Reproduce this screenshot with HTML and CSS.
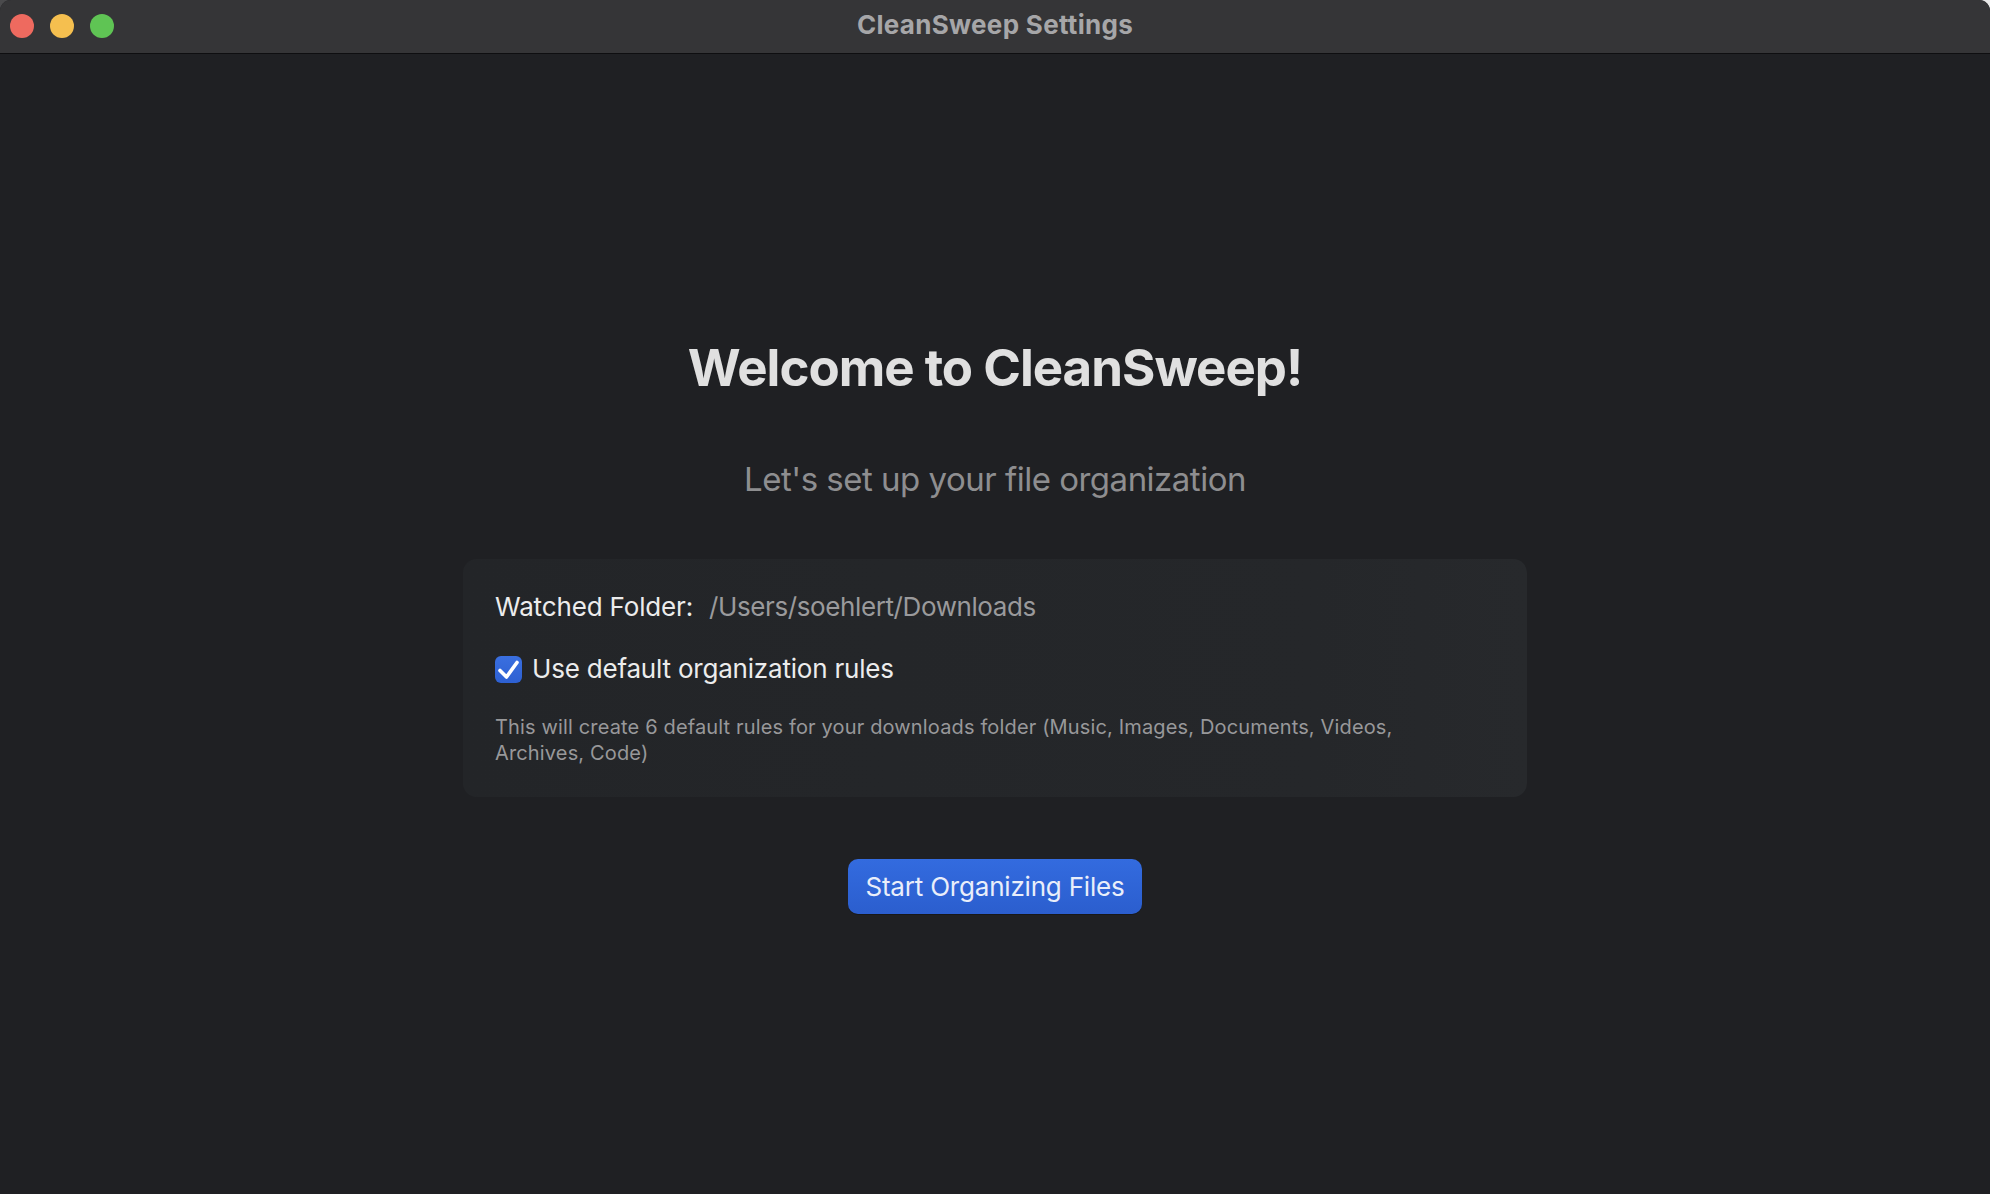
FILE: index.html
```html
<!DOCTYPE html>
<html lang="en">
<head>
<meta charset="utf-8">
<title>CleanSweep Settings</title>
<link rel="stylesheet" href="styles.css">
</head>
<body>
<div class="window">
  <header class="titlebar">
    <div class="lights">
      <span class="light red"></span>
      <span class="light yellow"></span>
      <span class="light green"></span>
    </div>
    <div class="title">CleanSweep Settings</div>
  </header>
  <main class="content">
    <h1 class="heading">Welcome to CleanSweep!</h1>
    <p class="subtitle">Let's set up your file organization</p>
    <section class="card">
      <div class="row folder-row">
        <span class="label">Watched Folder:</span>
        <span class="path">/Users/soehlert/Downloads</span>
      </div>
      <label class="row check-row">
        <span class="checkbox">
          <svg viewBox="0 0 27 27" width="27" height="27"><path d="M5 14.5 L11.5 21 L22 6.5" fill="none" stroke="#fff" stroke-width="3.6" stroke-linecap="round" stroke-linejoin="round"/></svg>
        </span>
        <span class="check-text">Use default organization rules</span>
      </label>
      <p class="desc">This will create 6 default rules for your downloads folder (Music, Images, Documents, Videos, Archives, Code)</p>
    </section>
    <button class="primary">Start Organizing Files</button>
  </main>
</div>
</body>
</html>
```
FILE: styles.css
```css
* { box-sizing: border-box; }
html, body {
  margin: 0;
  height: 100%;
}
body {
  background: linear-gradient(90deg, #4a4a4c 0%, #e8e8e8 100%);
  font-family: Inter, "Noto Sans", "Liberation Sans", sans-serif;
  overflow: hidden;
}
.window {
  height: 1194px;
  width: 1990px;
  display: flex;
  flex-direction: column;
  border-radius: 11px 11px 0 0;
  overflow: hidden;
  background: #1f2023;
}
.titlebar {
  height: 54px;
  flex: none;
  background: #353537;
  border-bottom: 1px solid #0e0e10;
  display: flex;
  align-items: center;
  position: relative;
}
.lights {
  display: flex;
  gap: 16px;
  padding-left: 10px;
  position: absolute;
  left: 0;
  top: 14px;
}
.light {
  width: 24px;
  height: 24px;
  border-radius: 50%;
  display: block;
}
.red { background: #ee6a5f; }
.yellow { background: #f5bf4f; }
.green { background: #5fc454; }
.title {
  flex: 1;
  text-align: center;
  font-size: 26px;
  font-weight: 700;
  color: #a6a6a8;
  letter-spacing: 0.3px;
  margin-top: -5px;
}
.content {
  flex: 1;
  display: flex;
  flex-direction: column;
  align-items: center;
  justify-content: center;
  gap: 60px;
  padding-top: 3px;
}
.heading {
  margin: 0;
  font-size: 51px;
  line-height: 62px;
  font-weight: 700;
  color: #e0e0e0;
  letter-spacing: -1.0px;
}
.subtitle {
  margin: 0;
  font-size: 33px;
  line-height: 40px;
  font-weight: 400;
  color: #8e8e90;
  letter-spacing: -0.5px;
}
.card {
  width: 1064px;
  padding: 32px 32px 31px 32px;
  border-radius: 14px;
  background: linear-gradient(90deg, #232528 0%, #25272a 80%, #27292c 100%);
  display: flex;
  flex-direction: column;
}
.row {
  display: flex;
  align-items: center;
  font-size: 26px;
  line-height: 32px;
}
.label {
  color: #ececec;
  letter-spacing: -0.15px;
}
.path {
  margin-left: 16px;
  color: #9a9a9c;
  letter-spacing: -0.4px;
}
.check-row {
  margin-top: 30px;
}
.checkbox {
  width: 27px;
  height: 27px;
  border-radius: 6px;
  background: linear-gradient(180deg, #3a6fe0 0%, #2d60d2 100%);
  display: flex;
  flex: none;
}
.check-text {
  margin-left: 10px;
  color: #ececec;
  letter-spacing: -0.2px;
}
.desc {
  margin: 29px 0 0 0;
  padding-right: 70px;
  font-size: 20px;
  line-height: 26px;
  color: #98989a;
  letter-spacing: 0.15px;
}
.primary {
  font-family: inherit;
  font-size: 26px;
  line-height: 32px;
  color: #e9eefa;
  letter-spacing: -0.2px;
  background: linear-gradient(180deg, #336bdf 0%, #2b5ece 100%);
  border: none;
  border-radius: 10px;
  height: 55px;
  padding: 0 17px;
  margin-top: 2px;
  box-shadow: 0 1px 0 rgba(0,0,0,0.25);
}
```
